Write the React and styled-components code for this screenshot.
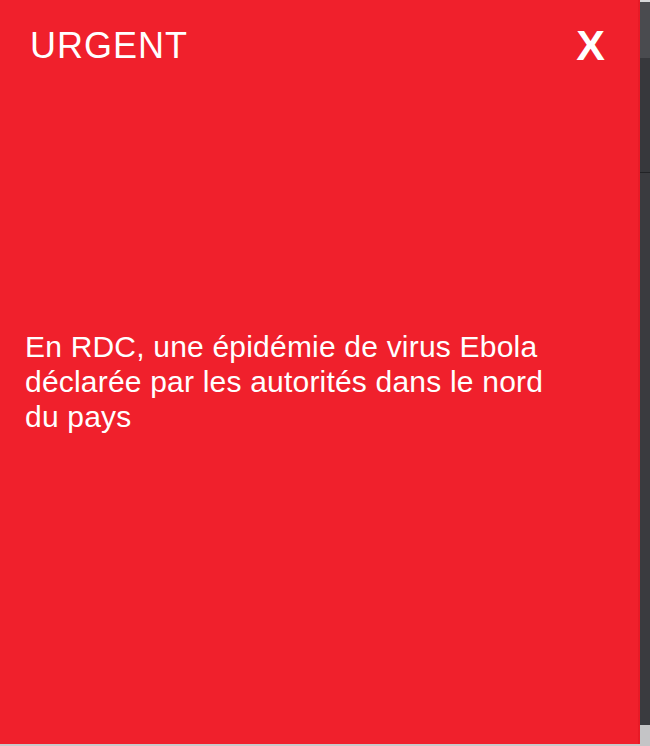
import styled, { createGlobalStyle } from "styled-components";

const Global = createGlobalStyle`
  html, body {
    margin: 0;
    padding: 0;
    background: #c9c9cb;
  }
  body {
    font-family: "Liberation Sans", Arial, sans-serif;
  }
`;

const Screen = styled.div`
  display: flex;
  width: 650px;
  height: 746px;
  overflow: hidden;
`;

const Panel = styled.div`
  display: flex;
  flex-direction: column;
  width: 638px;
  height: 744px;
  background: #f0202c;
  border-right: 2px solid #e81a26;
  color: #ffffff;
`;

const Header = styled.div`
  display: flex;
  align-items: center;
  justify-content: space-between;
  height: 91px;
  padding: 0 33px 0 30px;
`;

const Title = styled.h1`
  margin: 0;
  font-size: 36px;
  font-weight: 400;
  letter-spacing: 1px;
`;

const Close = styled.button`
  border: none;
  background: none;
  padding: 0;
  color: #ffffff;
  font-family: "Liberation Sans", Arial, sans-serif;
  font-size: 43px;
  font-weight: 700;
  cursor: pointer;
`;

const Body = styled.div`
  flex: 1;
  display: flex;
  align-items: center;
  padding: 0 80px 73px 25px;
`;

const Message = styled.p`
  margin: 0;
  font-size: 30px;
  line-height: 35px;
  letter-spacing: 0.2px;
`;

const Side = styled.div`
  display: flex;
  flex-direction: column;
  flex: 1;
`;

const SideBand = styled.div`
  height: ${(p) => p.h}px;
  background: ${(p) => p.bg};
  border-bottom: ${(p) => (p.line ? "1px solid #222326" : "none")};
`;

function App() {
  return (
    <Screen>
      <Global />
      <Panel>
        <Header>
          <Title>URGENT</Title>
          <Close>X</Close>
        </Header>
        <Body>
          <Message>
            En RDC, une épidémie de virus Ebola déclarée par les autorités dans
            le nord du pays
          </Message>
        </Body>
      </Panel>
      <Side>
        <SideBand h={2} bg="#d8d8da" />
        <SideBand h={56} bg="#4a4b4f" />
        <SideBand h={114} bg="#37383c" line />
        <SideBand h={553} bg="#3a3b3f" />
        <SideBand h={21} bg="#c4c4c6" />
      </Side>
    </Screen>
  );
}

export default App;
